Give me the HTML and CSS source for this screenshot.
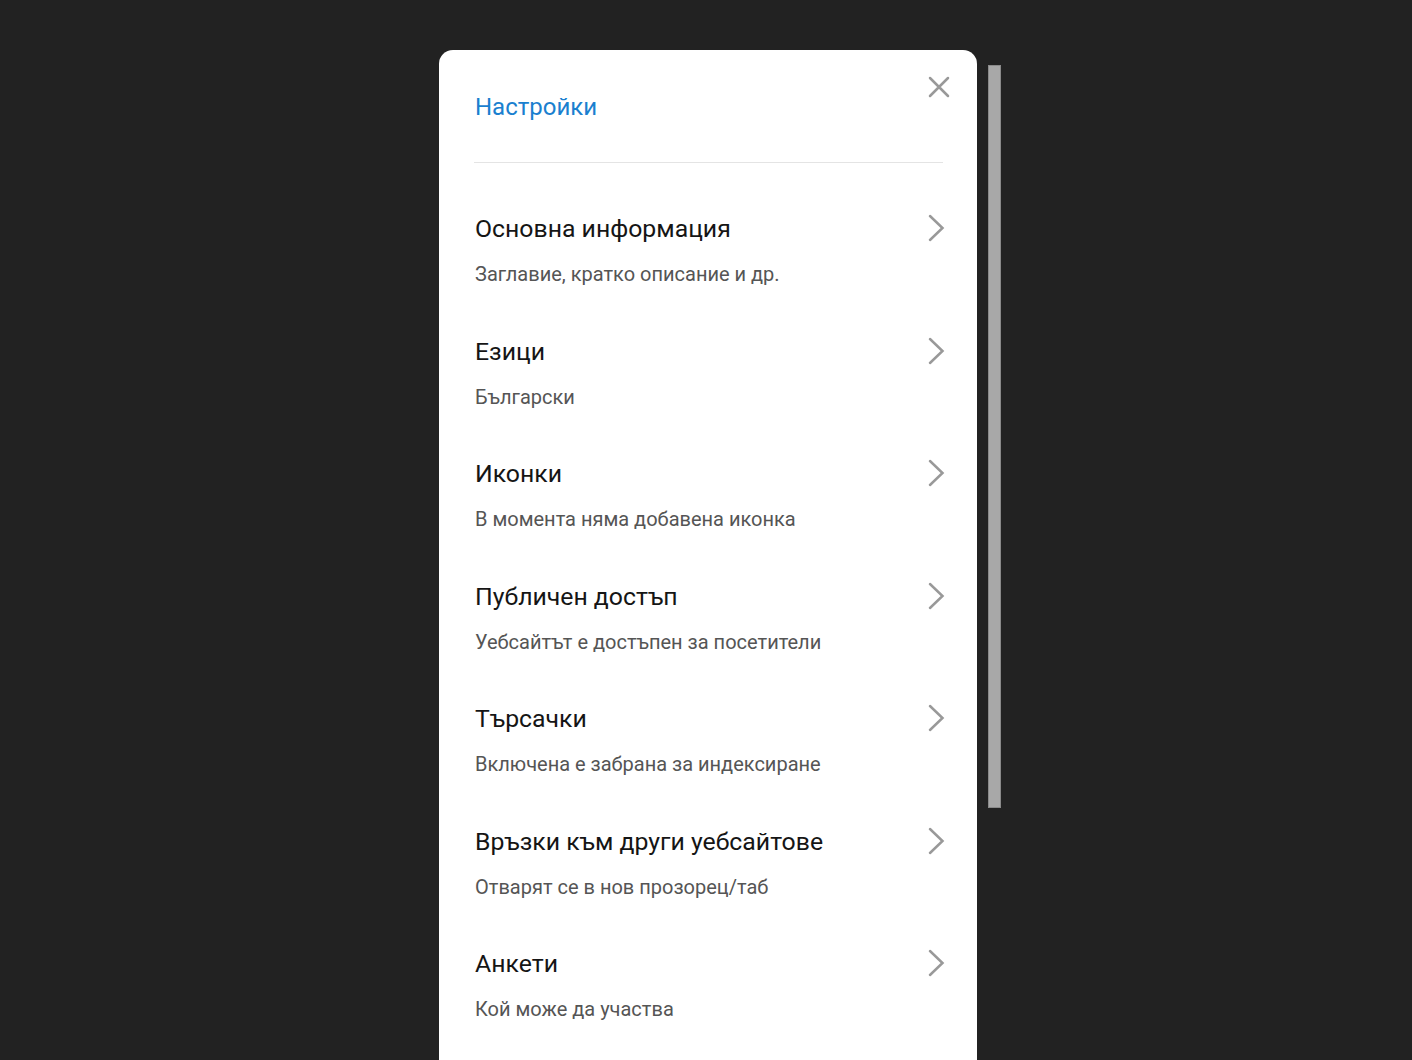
FILE: index.html
```html
<!DOCTYPE html>
<html lang="bg">
<head>
<meta charset="utf-8">
<title>Настройки</title>
<link rel="stylesheet" href="styles.css">
</head>
<body>
<div class="stage">
  <div class="modal">
    <div class="header">
      <h1 class="title">Настройки</h1>
      <button class="close" aria-label="Затвори">
        <svg width="22" height="22" viewBox="0 0 22 22"><path d="M2 2 L20 20 M20 2 L2 20" stroke="#999" stroke-width="2.5" fill="none" stroke-linecap="round"/></svg>
      </button>
    </div>
    <ul class="list">
      <li class="item"><div class="text"><div class="name">Основна информация</div><div class="desc">Заглавие, кратко описание и др.</div></div><svg class="chev" width="18" height="28" viewBox="0 0 18 28"><path d="M2 2 L14.5 14 L2 26" stroke="#999" stroke-width="2.5" fill="none" stroke-linecap="round"/></svg></li>
      <li class="item"><div class="text"><div class="name">Езици</div><div class="desc">Български</div></div><svg class="chev" width="18" height="28" viewBox="0 0 18 28"><path d="M2 2 L14.5 14 L2 26" stroke="#999" stroke-width="2.5" fill="none" stroke-linecap="round"/></svg></li>
      <li class="item"><div class="text"><div class="name">Иконки</div><div class="desc">В момента няма добавена иконка</div></div><svg class="chev" width="18" height="28" viewBox="0 0 18 28"><path d="M2 2 L14.5 14 L2 26" stroke="#999" stroke-width="2.5" fill="none" stroke-linecap="round"/></svg></li>
      <li class="item"><div class="text"><div class="name">Публичен достъп</div><div class="desc">Уебсайтът е достъпен за посетители</div></div><svg class="chev" width="18" height="28" viewBox="0 0 18 28"><path d="M2 2 L14.5 14 L2 26" stroke="#999" stroke-width="2.5" fill="none" stroke-linecap="round"/></svg></li>
      <li class="item"><div class="text"><div class="name">Търсачки</div><div class="desc">Включена е забрана за индексиране</div></div><svg class="chev" width="18" height="28" viewBox="0 0 18 28"><path d="M2 2 L14.5 14 L2 26" stroke="#999" stroke-width="2.5" fill="none" stroke-linecap="round"/></svg></li>
      <li class="item"><div class="text"><div class="name">Връзки към други уебсайтове</div><div class="desc">Отварят се в нов прозорец/таб</div></div><svg class="chev" width="18" height="28" viewBox="0 0 18 28"><path d="M2 2 L14.5 14 L2 26" stroke="#999" stroke-width="2.5" fill="none" stroke-linecap="round"/></svg></li>
      <li class="item"><div class="text"><div class="name">Анкети</div><div class="desc">Кой може да участва</div></div><svg class="chev" width="18" height="28" viewBox="0 0 18 28"><path d="M2 2 L14.5 14 L2 26" stroke="#999" stroke-width="2.5" fill="none" stroke-linecap="round"/></svg></li>
    </ul>
  </div>
  <div class="scrollbar"></div>
</div>
</body>
</html>
```

FILE: styles.css
```css
* { box-sizing: border-box; }
html, body {
  margin: 0;
  padding: 0;
  height: 100%;
  overflow: hidden;
  background: #222222;
  font-family: Roboto, "Noto Sans", sans-serif;
}
.stage {
  display: flex;
  align-items: flex-start;
  padding: 50px 0 0 439px;
  gap: 11px;
}
.modal {
  width: 538px;
  min-height: 1100px;
  background: #ffffff;
  border-radius: 14px 14px 0 0;
  padding: 0 34px 0 36px;
}
.header {
  position: relative;
  padding: 40px 0 38px;
  border-bottom: 1px solid #e4e4e4;
  margin-left: -1px;
}
.title {
  margin: 0 0 0 1px;
  font-weight: 400;
  font-size: 24px;
  line-height: 34px;
  color: #1a80cf;
}
.close {
  position: absolute;
  top: 26px;
  right: -7px;
  width: 22px;
  height: 22px;
  padding: 0;
  border: 0;
  background: none;
  display: block;
}
.close svg { display: block; }
.list {
  list-style: none;
  margin: 0;
  padding: 26px 0 0;
}
.item {
  display: flex;
  align-items: flex-start;
  justify-content: space-between;
  padding: 24px 0 24.5px;
}
.name {
  font-size: 24.8px;
  line-height: 32px;
  color: #151515;
}
.desc {
  margin-top: 16px;
  font-size: 20px;
  line-height: 26px;
  color: #555555;
}
.chev {
  display: block;
  margin-top: 1px;
  margin-right: -3px;
  flex: none;
}
.scrollbar {
  margin-top: 15px;
  width: 13px;
  height: 743px;
  background: #a8a8a8;
  border: 1px solid #8a8a8a;
}
```
